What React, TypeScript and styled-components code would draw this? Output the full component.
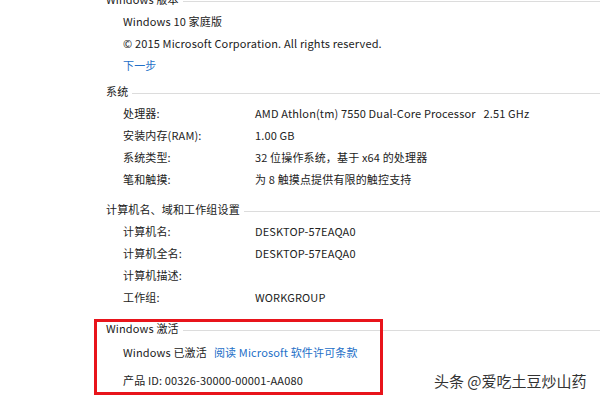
import React from 'react';
import styled, { createGlobalStyle } from 'styled-components';

const GlobalStyle = createGlobalStyle`
  html, body {
    margin: 0;
    padding: 0;
    background: #fff;
  }
  body {
    width: 600px;
    height: 400px;
    overflow: hidden;
    font-family: "Noto Sans CJK SC", "Noto Sans", sans-serif;
    font-size: 11px;
    letter-spacing: 0.15px;
    color: #222;
  }
`;

const Page = styled.div`
  position: relative;
  width: 600px;
  height: 400px;
  overflow: hidden;
`;

const Content = styled.div`
  display: flex;
  flex-direction: column;
  padding-left: 106px;
  margin-top: -12px;
`;

const Section = styled.section<{ $after?: number }>`
  display: flex;
  flex-direction: column;
  margin-bottom: ${p => p.$after ?? 0}px;
`;

const Body = styled.div<{ $gap?: number; $top?: number }>`
  display: flex;
  flex-direction: column;
  row-gap: ${p => p.$gap ?? 0}px;
  margin-top: ${p => p.$top ?? 0}px;
`;

const Header = styled.div`
  display: flex;
  align-items: center;
  height: 22px;
  gap: 4px;
  color: #1a1a1a;
`;

const HeaderLine = styled.div`
  flex: 1;
  height: 1px;
  margin-top: 4px;
  background: #dcdcdc;
`;

const Row = styled.div`
  display: grid;
  grid-template-columns: 132px 1fr;
  height: 22px;
  line-height: 22px;
  padding-left: 17px;
  white-space: pre;
`;

const Line = styled.div`
  height: 22px;
  line-height: 22px;
  padding-left: 17px;
  white-space: nowrap;
`;

const Link = styled.span`
  color: #2470c8;
`;

const Gap = styled.span`
  display: inline-block;
  width: 7px;
`;

const Highlight = styled.div`
  position: absolute;
  left: 94px;
  top: 319px;
  width: 289px;
  height: 76px;
  box-sizing: border-box;
  border: 3px solid #e8141b;
  pointer-events: none;
`;

const Watermark = styled.div`
  position: absolute;
  left: 434px;
  top: 371px;
  font-size: 15px;
  line-height: 20px;
  letter-spacing: 0;
  color: #333;
  text-shadow: 0 0 2px #fff, 1px 1px 1px #fff, -1px -1px 1px #fff;
  white-space: nowrap;
`;

type Item = [string, string];

const system: Item[] = [
  ['处理器:', 'AMD Athlon(tm) 7550 Dual-Core Processor   2.51 GHz'],
  ['安装内存(RAM):', '1.00 GB'],
  ['系统类型:', '32 位操作系统，基于 x64 的处理器'],
  ['笔和触摸:', '为 8 触摸点提供有限的触控支持'],
];

const computer: Item[] = [
  ['计算机名:', 'DESKTOP-57EAQA0'],
  ['计算机全名:', 'DESKTOP-57EAQA0'],
  ['计算机描述:', ''],
  ['工作组:', 'WORKGROUP'],
];

const SectionHeader = ({ title }: { title: string }) => (
  <Header>
    <span>{title}</span>
    <HeaderLine />
  </Header>
);

export default function App() {
  return (
    <Page>
      <GlobalStyle />
      <Content>
        <Section $after={4}>
          <SectionHeader title="Windows 版本" />
          <Body>
            <Line>Windows 10 家庭版</Line>
            <Line>© 2015 Microsoft Corporation. All rights reserved.</Line>
            <Line>
              <Link>下一步</Link>
            </Line>
          </Body>
        </Section>

        <Section $after={8}>
          <SectionHeader title="系统" />
          <Body>
            {system.map(([k, v]) => (
              <Row key={k}>
                <span>{k}</span>
                <span>{v}</span>
              </Row>
            ))}
          </Body>
        </Section>

        <Section $after={9}>
          <SectionHeader title="计算机名、域和工作组设置" />
          <Body>
            {computer.map(([k, v]) => (
              <Row key={k}>
                <span>{k}</span>
                <span>{v}</span>
              </Row>
            ))}
          </Body>
        </Section>

        <Section>
          <SectionHeader title="Windows 激活" />
          <Body $top={2} $gap={6}>
            <Line>
              Windows 已激活<Gap />
              <Link>阅读 Microsoft 软件许可条款</Link>
            </Line>
            <Line>产品 ID: 00326-30000-00001-AA080</Line>
          </Body>
        </Section>
      </Content>

      <Highlight />
      <Watermark>头条 @爱吃土豆炒山药</Watermark>
    </Page>
  );
}
